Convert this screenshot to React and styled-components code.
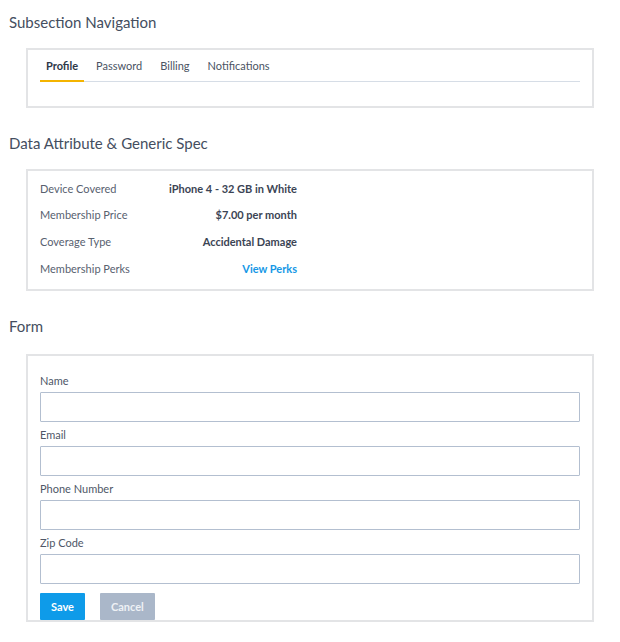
import React from "react";
import styled, { createGlobalStyle } from "styled-components";

const Global = createGlobalStyle`
  html, body { margin: 0; padding: 0; background: #fff; }
  body { font-family: Lato, "Liberation Sans", sans-serif; color: #3f4859; }
  * { box-sizing: border-box; }
`;

const Page = styled.div`
  padding: 12px 26px 0 9px;
  width: 620px;
`;

const Title = styled.h2`
  margin: ${(p) => (p.$first ? "0" : "25px")} 0 ${(p) => p.$below || "16px"} 0;
  font-size: 15px;
  line-height: 20px;
  font-weight: 400;
  color: #444e60;
`;

const Card = styled.div`
  margin-left: 17px;
  width: 568px;
  border: 2px solid #e3e4e6;
  padding: ${(p) => p.$pad || "0 12px"};
`;

const Tabs = styled.nav`
  display: flex;
  gap: 6px;
  border-bottom: 1px solid #d6dde6;
  margin-top: 6px;
  margin-bottom: 24px;
`;

const Tab = styled.a`
  display: block;
  padding: 3px 6px 7px;
  font-size: 11px;
  line-height: 14px;
  color: ${(p) => (p.$active ? "#2e3848" : "#4a5363")};
  font-weight: ${(p) => (p.$active ? 700 : 400)};
  border-bottom: 2px solid ${(p) => (p.$active ? "#f4b400" : "transparent")};
  margin-bottom: -1px;
  cursor: pointer;
`;

const SpecList = styled.dl`
  margin: 0;
  width: 257px;
  display: grid;
  grid-template-columns: 1fr auto;
  grid-auto-rows: 26.67px;
  align-items: center;
`;

const SpecLabel = styled.dt`
  font-size: 11px;
  color: #58616f;
`;

const SpecValue = styled.dd`
  margin: 0;
  text-align: right;
  font-size: 11px;
  font-weight: 700;
  color: ${(p) => (p.$link ? "#1598e6" : "#3b4454")};
`;

const Form = styled.form`
  display: flex;
  flex-direction: column;
`;

const Field = styled.label`
  display: flex;
  flex-direction: column;
  gap: 3px;
  margin-bottom: 5px;
`;

const FieldLabel = styled.span`
  font-size: 11px;
  line-height: 16px;
  color: #4e5767;
`;

const Input = styled.input`
  height: 30px;
  width: 100%;
  border: 1px solid #b3bfd0;
  border-radius: 1px;
  outline: none;
  padding: 0 8px;
  font-size: 12px;
`;

const Actions = styled.div`
  display: flex;
  gap: 15px;
  margin-top: 4px;
`;

const Button = styled.button`
  height: 27px;
  padding: 0 11px;
  border: none;
  border-radius: 1px;
  font-family: inherit;
  font-size: 11px;
  font-weight: 700;
  color: ${(p) => (p.$secondary ? "#eef1f5" : "#fff")};
  background: ${(p) => (p.$secondary ? "#aab7c9" : "#0e9be9")};
  cursor: pointer;
`;

const specs = [
  ["Device Covered", "iPhone 4 - 32 GB in White"],
  ["Membership Price", "$7.00 per month"],
  ["Coverage Type", "Accidental Damage"],
  ["Membership Perks", "View Perks", true],
];

export default function App() {
  return (
    <>
      <Global />
      <Page>
        <Title $first>Subsection Navigation</Title>
        <Card>
          <Tabs>
            <Tab $active>Profile</Tab>
            <Tab>Password</Tab>
            <Tab>Billing</Tab>
            <Tab>Notifications</Tab>
          </Tabs>
        </Card>

        <Title>Data Attribute &amp; Generic Spec</Title>
        <Card $pad="4px 12px 7px">
          <SpecList>
            {specs.map(([k, v, link]) => (
              <React.Fragment key={k}>
                <SpecLabel>{k}</SpecLabel>
                <SpecValue $link={link}>{v}</SpecValue>
              </React.Fragment>
            ))}
          </SpecList>
        </Card>

        <Title $below="18px">Form</Title>
        <Card $pad="17px 12px 0">
          <Form onSubmit={(e) => e.preventDefault()}>
            {["Name", "Email", "Phone Number", "Zip Code"].map((l) => (
              <Field key={l}>
                <FieldLabel>{l}</FieldLabel>
                <Input type="text" />
              </Field>
            ))}
            <Actions>
              <Button type="submit">Save</Button>
              <Button type="button" $secondary>Cancel</Button>
            </Actions>
          </Form>
        </Card>
      </Page>
    </>
  );
}
